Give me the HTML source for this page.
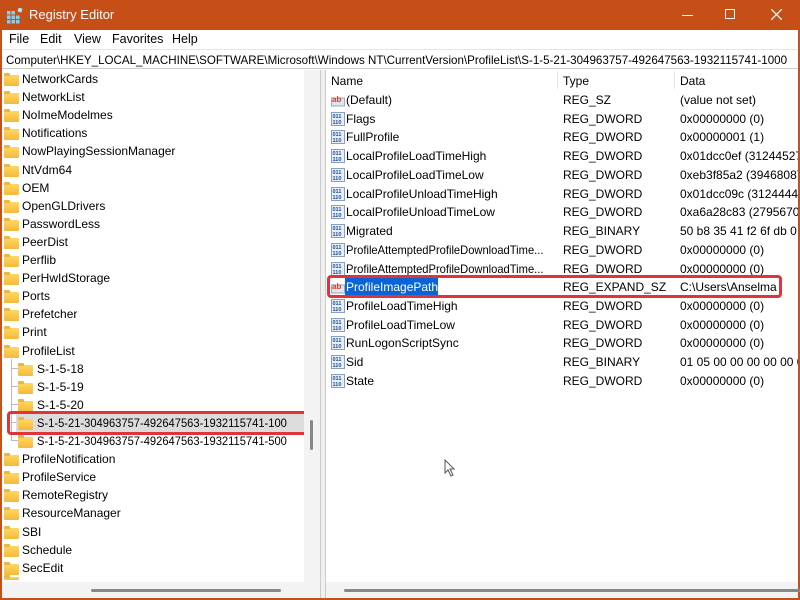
<!DOCTYPE html>
<html><head><meta charset="utf-8"><style>
*{margin:0;padding:0;box-sizing:border-box}
body{width:800px;height:600px;overflow:hidden;background:#c4501a;font-family:"Liberation Sans",sans-serif;font-size:12px;color:#000;position:relative}
.abs{position:absolute;white-space:nowrap}
#title{left:0;top:0;width:800px;height:30px;background:#c54f17;color:#fff}
#win{position:absolute;left:2px;top:30px;width:796px;height:568px;background:#fff}
.menu span{position:absolute;top:32px;font-size:12.5px}
#addr{left:2px;top:49px;width:796px;height:20px;border-top:1px solid #e5e5e5;border-bottom:1px solid #ccc;background:#fff;overflow:hidden}
#addrt{position:absolute;left:4px;top:3px;font-size:12px;transform-origin:0 0;white-space:nowrap}
#left{left:2px;top:70px;width:302px;height:512px;background:#fff;overflow:hidden}
#lscroll{left:304px;top:70px;width:16px;height:512px;background:#f3f3f3}
#split{left:320px;top:70px;width:6px;height:528px;background:#f0f0f0;border-left:1px solid #ccc;border-right:1px solid #ccc}
#bottom{left:2px;top:582px;width:318px;height:16px;background:#f3f3f3}
#rbottom{left:326px;top:582px;width:472px;height:16px;background:#f3f3f3}
.f{position:absolute;width:15px;height:11px;background:linear-gradient(#ffd760,#f5b93a);border-radius:1px}
.f:before{content:"";position:absolute;left:0;top:-2px;width:6px;height:3px;background:#f0b540;border-radius:1px 1px 0 0}
.t{position:absolute;font-size:12px;white-space:nowrap}
.ico{position:absolute;width:14px;height:14px}
</style></head><body>
<div class="abs" id="title">
<svg class="abs" style="left:7px;top:8px" width="16" height="16" viewBox="0 0 16 16"><g fill="#7fd0f5"><rect x="0" y="3" width="3.5" height="3.5"/><rect x="4.5" y="3" width="3.5" height="3.5"/><rect x="0" y="7.5" width="3.5" height="3.5"/><rect x="4.5" y="7.5" width="3.5" height="3.5"/><rect x="9" y="7.5" width="3.5" height="3.5"/><rect x="0" y="12" width="3.5" height="3.5"/><rect x="4.5" y="12" width="3.5" height="3.5"/><rect x="9" y="12" width="3.5" height="3.5"/></g><rect x="11" y="0" width="4" height="4" fill="#aee6ff" transform="rotate(20 13 2)"/></svg>
<span class="abs" style="left:29px;top:7px;font-size:13px">Registry Editor</span>
<div class="abs" style="left:682px;top:15px;width:11px;height:1px;background:#fff"></div>
<div class="abs" style="left:725px;top:9px;width:10px;height:10px;border:1px solid #fff;border-radius:1px"></div>
<svg class="abs" style="left:771px;top:9px" width="11" height="11"><path d="M0 0L11 11M11 0L0 11" stroke="#fff" stroke-width="1.2"/></svg>
</div>
<div id="win"></div>
<div class="menu"><span style="left:9px">File</span><span style="left:40px">Edit</span><span style="left:74px">View</span><span style="left:112px">Favorites</span><span style="left:172px">Help</span></div>
<div class="abs" id="addr"><span id="addrt">Computer\HKEY_LOCAL_MACHINE\SOFTWARE\Microsoft\Windows NT\CurrentVersion\ProfileList\S-1-5-21-304963757-492647563-1932115741-1000</span></div>
<div class="abs" id="left">
<div style="position:absolute;left:9px;top:289px;width:1px;height:82px;background:#bbb"></div>
<div style="position:absolute;left:9px;top:298px;width:8px;height:1px;background:#bbb"></div>
<div style="position:absolute;left:9px;top:316px;width:8px;height:1px;background:#bbb"></div>
<div style="position:absolute;left:9px;top:334px;width:8px;height:1px;background:#bbb"></div>
<div style="position:absolute;left:9px;top:352px;width:8px;height:1px;background:#bbb"></div>
<div style="position:absolute;left:9px;top:370px;width:8px;height:1px;background:#bbb"></div>
<div style="position:absolute;left:14px;top:344px;width:290px;height:18px;background:#dcdcdc"></div>
<div id="treewrap"></div>
</div>
<div class="abs" style="left:7px;top:411px;width:311px;height:24px;border:3px solid #e0343a;border-radius:4px"></div>
<div class="abs" id="lscroll"><div style="position:absolute;left:6px;top:350px;width:3px;height:30px;background:#888;border-radius:2px"></div></div>
<div class="abs" id="split"></div>
<div class="abs" id="bottom"><div style="position:absolute;left:89px;top:7px;width:190px;height:3px;background:#888;border-radius:2px"></div></div>
<div class="abs" id="rbottom"><div style="position:absolute;left:18px;top:7px;width:460px;height:3px;background:#888;border-radius:2px"></div></div>
<div class="abs" style="left:326px;top:70px;width:472px;height:512px;background:#fff;overflow:hidden" id="right"></div>
<script>
var a=document.getElementById("addrt");a.style.transform="scaleX("+(781/a.offsetWidth)+")";
var tl=[["NetworkCards",0],["NetworkList",0],["NoImeModelmes",0],["Notifications",0],["NowPlayingSessionManager",0],["NtVdm64",0],["OEM",0],["OpenGLDrivers",0],["PasswordLess",0],["PeerDist",0],["Perflib",0],["PerHwIdStorage",0],["Ports",0],["Prefetcher",0],["Print",0],["ProfileList",0],["S-1-5-18",1],["S-1-5-19",1],["S-1-5-20",1],["S-1-5-21-304963757-492647563-1932115741-100",1],["S-1-5-21-304963757-492647563-1932115741-500",1],["ProfileNotification",0],["ProfileService",0],["RemoteRegistry",0],["ResourceManager",0],["SBI",0],["Schedule",0],["SecEdit",0]];
var h="";
tl.forEach(function(r,i){var y=9+i*18.1;var fx=r[1]?16:2,tx=r[1]?35:20;
var st=r[1]&&r[0].length>20?'transform:scaleX(0.93);transform-origin:0 0;':'';
h+='<div class="f" style="left:'+fx+'px;top:'+(y-4)+'px"></div><div class="t" style="left:'+tx+'px;top:'+(y-7)+'px;'+st+'">'+r[0]+'</div>';});
h+='<div class="f" style="left:2px;top:507px;height:3px"></div>';
document.getElementById("treewrap").innerHTML=h;
var rows=[["(Default)","REG_SZ","(value not set)",1],["Flags","REG_DWORD","0x00000000 (0)"],["FullProfile","REG_DWORD","0x00000001 (1)"],["LocalProfileLoadTimeHigh","REG_DWORD","0x01dcc0ef (31244527"],["LocalProfileLoadTimeLow","REG_DWORD","0xeb3f85a2 (39468087"],["LocalProfileUnloadTimeHigh","REG_DWORD","0x01dcc09c (31244444"],["LocalProfileUnloadTimeLow","REG_DWORD","0xa6a28c83 (27956706"],["Migrated","REG_BINARY","50 b8 35 41 f2 6f db 0"],["ProfileAttemptedProfileDownloadTime...","REG_DWORD","0x00000000 (0)"],["ProfileAttemptedProfileDownloadTime...","REG_DWORD","0x00000000 (0)"],["ProfileImagePath","REG_EXPAND_SZ","C:\\Users\\Anselma",1],["ProfileLoadTimeHigh","REG_DWORD","0x00000000 (0)"],["ProfileLoadTimeLow","REG_DWORD","0x00000000 (0)"],["RunLogonScriptSync","REG_DWORD","0x00000000 (0)"],["Sid","REG_BINARY","01 05 00 00 00 00 00 0"],["State","REG_DWORD","0x00000000 (0)"]];
var g='<div class="t" style="left:5px;top:4px">Name</div><div class="t" style="left:237px;top:4px">Type</div><div class="t" style="left:354px;top:4px">Data</div>';
g+='<div style="position:absolute;left:231px;top:1px;width:1px;height:18px;background:#e5e5e5"></div><div style="position:absolute;left:348px;top:1px;width:1px;height:18px;background:#e5e5e5"></div>';
rows.forEach(function(r,i){var y=30+i*18.73;
var ico=r[3]?'<svg class="ico" style="left:5px;top:'+(y-7)+'px" viewBox="0 0 14 14"><rect x="0.5" y="5" width="13" height="8" fill="#dfe6ee" stroke="#9aa8b8"/><text x="1" y="9" font-size="8" font-weight="bold" fill="#d9382b" font-family="Liberation Sans">ab</text></svg>':'<svg class="ico" style="left:5px;top:'+(y-7)+'px" viewBox="0 0 14 14"><rect x="0.5" y="0.5" width="13" height="13" fill="#e8eef5" stroke="#8aa0b8"/><text x="1.5" y="6" font-size="5.5" fill="#1c4fa0" font-family="Liberation Sans" font-weight="bold">011</text><text x="1.5" y="12" font-size="5.5" fill="#1c4fa0" font-family="Liberation Sans" font-weight="bold">110</text></svg>';
if(i==10){g+='<div style="position:absolute;left:19px;top:'+(y-10)+'px;width:93px;height:19px;background:#0a64d6"></div><div style="position:absolute;left:1px;top:'+(y-12)+'px;width:455px;height:23px;border:3px solid #e0343a;border-radius:4px"></div>';}
var nm=r[0].length>30?'transform:scaleX(0.93);transform-origin:0 0;':'';
g+=ico+'<div class="t" style="left:20px;top:'+(y-7)+'px;'+nm+(i==10?'color:#fff':'')+'">'+r[0]+'</div><div class="t" style="left:237px;top:'+(y-7)+'px">'+r[1]+'</div><div class="t" style="left:354px;top:'+(y-7)+'px">'+r[2]+'</div>';});
g+='<svg style="position:absolute;left:118px;top:389px" width="12" height="18" viewBox="0 0 12 18"><path d="M1 1L1 14L4 11L7 17L9 16L6 10L10 10Z" fill="#fff" stroke="#555" stroke-width="1"/></svg>';
document.getElementById("right").innerHTML=g;
</script>
</body></html>
